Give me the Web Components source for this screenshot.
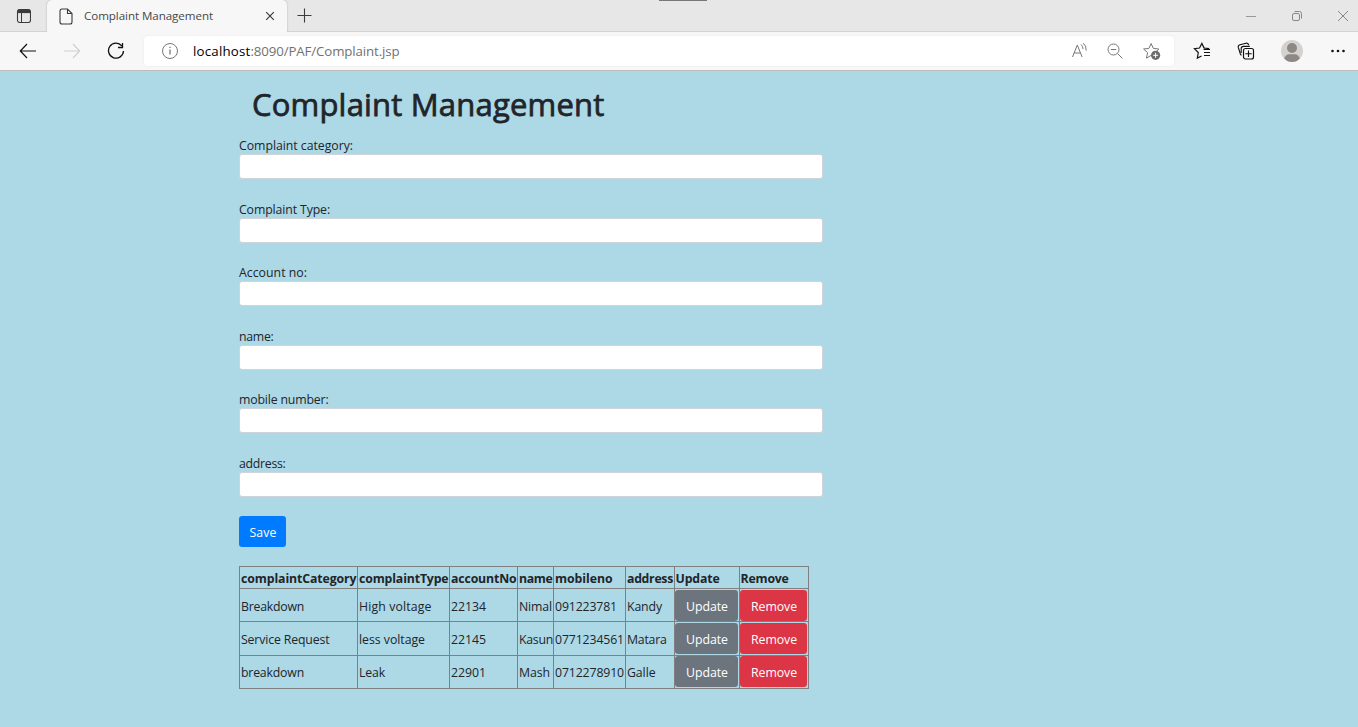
<!DOCTYPE html>
<html lang="en"><head><meta charset="utf-8"><title>Complaint Management</title>
<style>
html,body{margin:0;height:100%;overflow:hidden}
body{background:#add8e6;font-family:"Open Sans","Noto Sans",sans-serif;font-size:12.3px;color:#212529;display:flex;flex-direction:column}
</style></head><body>
<browser-chrome></browser-chrome>
<complaint-page></complaint-page>
<script>
const define=(name,html,setup)=>customElements.define(name,class extends HTMLElement{
  connectedCallback(){
    if(this.shadowRoot)return;
    const t=document.createElement('template');
    t.innerHTML=typeof html==='function'?html(this):html;
    this.attachShadow({mode:'open'}).append(t.content.cloneNode(true));
    if(setup)setup(this);
  }});

/* Text run whose letter spacing is tuned so that it takes the width in "w" */
define('fit-text','<style>:host{display:inline-block;white-space:pre}span{display:inline-block}</style><span><slot></slot></span>',el=>{
  const s=el.shadowRoot.querySelector('span'),w=+el.getAttribute('w'),n=el.textContent.length;
  if(w)s.style.letterSpacing=((w-s.getBoundingClientRect().width)/n)+'px';
});

define('browser-tabs',`<style>
:host{display:flex;height:32px;background:#e7e7e7;box-sizing:border-box;box-shadow:inset 0 -1px #d3d3d3;position:relative}
svg{display:block;fill:none;stroke:#3b3b3b;flex:none}
.menu{width:47px;display:flex;padding:8px 0 0 16px;box-sizing:border-box}
.tab{width:240px;height:32px;background:#f7f7f7;border-radius:5px 5px 0 0;box-shadow:0 0 2px #aaa;display:flex;align-items:center;box-sizing:border-box;padding-left:12px;clip-path:inset(-2px -3px 0 -3px)}
.title{font-size:11.6px;color:#484848;margin-left:11px;flex:1;line-height:32px}
.x{margin-right:12px}
.plus{margin:8px 0 0 10px}
.win{margin-left:auto;display:flex;padding:10px 9px 0 0;gap:34px}
.grip{position:absolute;left:659px;top:0;width:48px;height:1px;background:#777}
</style>
<div class="menu"><svg width="15" height="15" viewBox="0 0 15 15"><rect x="1.5" y="1.5" width="13" height="13" rx="2.2" stroke-width="1.1"/><path d="M2 3.4h12" stroke-width="3.4"/><path d="M5.5 5v9"/></svg></div>
<div class="tab"><svg width="14" height="17" viewBox="0 0 14 17"><path d="M3 1h5.5L13 5.500V14a2 2 0 0 1-2 2H3a2 2 0 0 1-2-2V3a2 2 0 0 1 2-2zM8.500 1v4.500H13" stroke-width="1.1"/></svg>
<span class="title"><fit-text w="129">Complaint Management</fit-text></span>
<svg class="x" width="10" height="10" viewBox="0 0 10 10"><path d="M1.200 1.200l7.600 7.600M8.800 1.200L1.200 8.800" stroke-width="1.2"/></svg></div>
<svg class="plus" width="15" height="15" viewBox="0 0 15 15"><path d="M7.500 .5v14M.5 7.500h14" stroke-width="1.1"/></svg>
<div class="grip"></div>
<div class="win">
<svg width="11" height="11" style="stroke:#999"><path d="M0 6.500h10"/></svg>
<svg width="12" height="12" style="stroke:#888"><rect x="1.500" y="3.500" width="7" height="7" rx="1.5"/><path d="M3.500 1.500h5a2 2 0 0 1 2 2v5"/></svg>
<svg width="12" height="12" style="stroke:#888"><path d="M1 1l10 10M11 1L1 11"/></svg></div>`);

define('address-bar',`<style>
:host{display:flex;height:38px;background:#f7f7f7;position:relative;border-bottom:1px solid #bcbcbc}
svg{display:block;fill:none;flex:none}
.nav{display:flex;width:144px;box-sizing:border-box;padding:10px 0 0 19px;gap:26px;stroke:#111}
.box{width:1030px;height:30px;margin-top:4px;background:#fff;border-radius:4px;display:flex;align-items:center;box-sizing:border-box;padding:0 13px 0 17px;box-shadow:0 0 2px #e4e4e4}
.url{flex:1;margin-left:14px;font-size:13.300px;color:#717171;line-height:30px}
b{font-weight:400;color:#000}
.tools{display:flex;gap:18px;stroke:#777}
.right{display:flex;flex:1;padding:8px 0 0 19px;gap:24px;stroke:#111}
</style>
<div class="nav">
<svg width="18" height="18"><path d="M17 9H1.500M8 2L1.300 9 8 16" stroke-width="1.200"/></svg>
<svg width="18" height="18" stroke="#cfcfcf"><path d="M1 9h15.500M10 2l6.700 7L10 16" stroke-width="1.200"/></svg>
<svg width="18" height="18"><path d="M14.800 3.900A7.500 7.500 0 1 0 16.500 9M15.500 1v4.500H11" stroke-width="1.300"/></svg></div>
<div class="box">
<svg width="18" height="18" stroke="#777"><circle cx="9" cy="9" r="7.500"/><path d="M9 7.500v5M9 4.700v1.400" stroke-width="1.300"/></svg>
<span class="url"><fit-text w="57.500"><b>localhost</b></fit-text><fit-text w="149">:8090/PAF/Complaint.jsp</fit-text></span>
<div class="tools">
<svg width="18" height="18"><path d="M2.500 15L7.300 3 12.100 15M4.200 11h6.200M11 2.500q2 1.500 2 4.500M13.200 1.200q3.200 2.400 3 7.300"/></svg>
<svg width="18" height="18"><circle cx="7.500" cy="7.500" r="5.500"/><path d="M4.800 7.500h5.400M11.500 11.500l5 5"/></svg>
<svg width="19" height="18" viewBox="0 0 19 18"><g transform="translate(.6 .3)"><path d="M8.500 1.200L6.300 6.100 1 6.700l4 3.600-1.100 5.500 4.600-2.700M8.500 1.200l2.200 4.900 5.500.6-2 2"/><circle cx="13" cy="13" r="4.600" fill="#6b6b6b" stroke="none"/><path d="M13 10.500v5M10.500 13h5" stroke="#fff"/></g></svg>
</div></div>
<div class="right">
<svg width="20" height="20"><path d="M11.700 8.200L11 8 8.900 3.400 6.500 8 1.400 8.700l3.900 3.800-1 5.600L8.500 15.900M8.900 3.400l2.300 4.600 5 .6" stroke-width="1.150"/><path d="M10.500 9.500H17M11 12.500H17M11 15.500H17"/></svg>
<svg width="20" height="20"><g transform="translate(0 1)"><path d="M4.500 14.200C2.800 13.500 3 11.500 2.500 10L1.300 6.500C.9 4.800 1.500 4.200 3 3.800L9 2.200c1.600-.4 2.300.1 2.800 2M4.200 12V7.600q0-2.200 2.300-2.200h6.300" stroke-width="1.100"/><rect x="6.500" y="7.500" width="10" height="10.500" rx="2" stroke-width="1.200"/><path d="M11.500 9.500v6.500M8.300 12.700h6.400" stroke-width="1.100"/></g></svg>
<svg width="22" height="22" style="margin-left:0" stroke="none"><circle cx="11" cy="11" r="11" fill="#d4d2ce"/><circle cx="11" cy="8" r="5" fill="#8c8885"/><path d="M3.200 18.500Q5 14.300 8 14.300h6q3 0 4.800 4.200Q15.500 22 11 22T3.200 18.500z" fill="#8c8885"/></svg>
<svg width="18" height="20" style="margin-left:1px" stroke="none"><g fill="#111"><circle cx="4.500" cy="11" r="1.300"/><circle cx="10" cy="11" r="1.300"/><circle cx="15.500" cy="11" r="1.300"/></g></svg></div>`);

define('browser-chrome','<style>:host{display:block;height:71px;flex:none}</style><browser-tabs></browser-tabs><address-bar></address-bar>');

define('form-field',`<style>
:host{display:block;height:63.600px}
label{display:block;height:17px;line-height:17px}
input{display:block;box-sizing:border-box;width:584px;height:25px;border:1px solid #ced4da;border-radius:3px;background:#fff;outline:0;margin:0}
</style><label><slot></slot></label><input type="text">`);

define('app-button',`<style>
:host{display:flex;align-items:center;justify-content:center;height:31px;border-radius:3.200px;background:#007bff;color:#fff;box-sizing:border-box;padding:2px 0 0 1px}
:host([kind=update]){background:#6c757d}
:host([kind=remove]){background:#dc3545}
</style><slot></slot>`);

const heads=[['complaintCategory',115.5],['complaintType',89.5],['accountNo',65.5],['name',33.500],['mobileno',57.500],['address',46],['Update',44],['Remove',48]];
const rows=[
 [['Breakdown',63],['High voltage',72.500],['22134',35],['Nimal',33],['091223781',62],['Kandy',35]],
 [['Service Request',88.500],['less voltage',66],['22145',35],['Kasun',34],['0771234561',69],['Matara',39.500]],
 [['breakdown',63],['Leak',26],['22901',35],['Mash',31],['0712278910',69],['Galle',28.500]]];
const fit=([t,w])=>'<fit-text w="'+w+'">'+t+'</fit-text>';
define('complaint-table',()=>`<style>
:host{display:grid;width:570px;box-sizing:border-box;grid-template-columns:118px 92px 68px 36px 72px 49px 65px 69px;grid-template-rows:22px 33px 34px 33px;border:solid #808080;border-width:0 1px 1px 0}
div{border:solid #808080;border-width:1px 0 0 1px;padding:3px 0 0 1px;display:flex;align-items:center;box-sizing:border-box;min-width:0}
.h{font-weight:700;padding-top:2px}
.h:nth-of-type(7),.h:nth-of-type(8){padding-left:.6px}
.b{padding:1px 1px 0 0;align-items:flex-start}.b app-button{flex:1}
.mid{padding-top:1px}.last{padding-top:0}
</style>`+heads.map(h=>'<div class="h">'+fit(h)+'</div>').join('')+rows.map((r,i)=>r.map(c=>'<div'+(i?' style="padding-top:2px"':'')+'>'+fit(c)+'</div>').join('')+
`<div class="b ${['','mid','last'][i]}"><app-button kind="update">${fit(['Update',42])}</app-button></div><div class="b ${['','mid','last'][i]}"><app-button kind="remove">${fit(['Remove',46])}</app-button></div>`).join(''));

define('complaint-page',`<style>
:host{display:block;padding:0 0 0 239px}
h1{margin:0;padding:13px 0 0 13px;height:53px;line-height:40px;font-size:31px;font-weight:500;-webkit-text-stroke:.75px #212529}
form{display:block;margin:0}
app-button{width:47px}
complaint-table{margin-top:19px}
</style>
<h1><fit-text w="352.500">Complaint Management</fit-text></h1>
<form>
<form-field><fit-text w="114">Complaint category:</fit-text></form-field>
<form-field><fit-text w="91">Complaint Type:</fit-text></form-field>
<form-field><fit-text w="68">Account no:</fit-text></form-field>
<form-field><fit-text w="34.500">name:</fit-text></form-field>
<form-field><fit-text w="89.500">mobile number:</fit-text></form-field>
<form-field style="height:61px"><fit-text w="46.500">address:</fit-text></form-field>
<app-button><fit-text w="27">Save</fit-text></app-button>
</form>
<complaint-table></complaint-table>`);
</script></body></html>
